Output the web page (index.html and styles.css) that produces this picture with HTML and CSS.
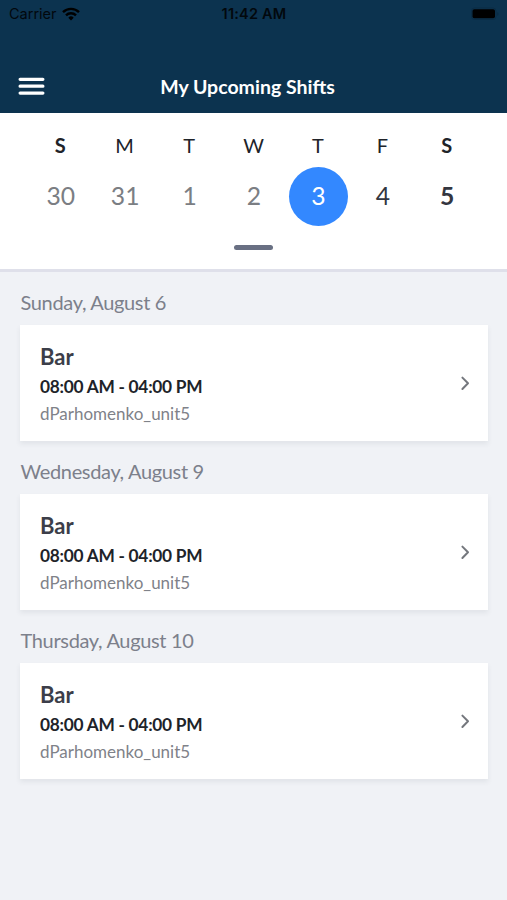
FILE: index.html
```html
<!DOCTYPE html>
<html lang="en">
<head>
<meta charset="utf-8">
<title>My Upcoming Shifts</title>
<link rel="stylesheet" href="styles.css">
</head>
<body>
<header class="header">
  <div class="status">
    <div class="carrier"><span>Carrier</span>
      <svg class="wifi" width="18" height="14" viewBox="0 0 18 14"><g fill="none" stroke="#000" stroke-width="2.4"><path d="M1 5.2a11.3 11.3 0 0 1 16 0"/><path d="M4 8.3a7.1 7.1 0 0 1 10 0"/></g><path d="M9 13.4L6.3 10.7a3.8 3.8 0 0 1 5.4 0z"/></svg>
    </div>
    <div class="clock">11:42 AM</div>
    <svg class="battery" width="28" height="14" viewBox="0 0 28 14"><rect x=".5" y="1" width="24.5" height="11.5" rx="3" fill="none" stroke="#0a2c45"/><rect x="1.5" y="2.3" width="22.5" height="8.9" rx="1.8"/><path d="M26.2 5v4q1.3-.5 1.3-2t-1.3-2z" fill="#0a2c45"/></svg>
  </div>
  <div class="navbar">
    <svg class="menu" width="27" height="20" viewBox="0 0 27 20"><path d="M2.1 3.3h22.8M2.1 10.2h22.8M2.1 17.1h22.8" stroke="#fff" stroke-width="3.2" stroke-linecap="round"/></svg>
    <h1 class="title">My Upcoming Shifts</h1>
  </div>
</header>
<section class="week">
  <div class="days names"><span class="bold">S</span><span>M</span><span>T</span><span>W</span><span>T</span><span>F</span><span class="bold">S</span></div>
  <div class="days dates"><span class="past">30</span><span class="past">31</span><span class="past">1</span><span class="past">2</span><span class="selected">3</span><span>4</span><span class="bold">5</span></div>
  <div class="handle"></div>
</section>
<main class="shifts">
  <section class="group">
    <h2 class="date">Sunday, August 6</h2>
    <article class="card">
      <div><h3 class="role">Bar</h3><p class="time">08:00 AM - 04:00 PM</p><p class="unit">dParhomenko_unit5</p></div>
      <svg class="chevron" width="10" height="16" viewBox="0 0 10 16"><path d="M2.4 2.6L8 8.3 2.4 14"/></svg>
    </article>
  </section>
  <section class="group">
    <h2 class="date">Wednesday, August 9</h2>
    <article class="card">
      <div><h3 class="role">Bar</h3><p class="time">08:00 AM - 04:00 PM</p><p class="unit">dParhomenko_unit5</p></div>
      <svg class="chevron" width="10" height="16" viewBox="0 0 10 16"><path d="M2.4 2.6L8 8.3 2.4 14"/></svg>
    </article>
  </section>
  <section class="group">
    <h2 class="date">Thursday, August 10</h2>
    <article class="card">
      <div><h3 class="role">Bar</h3><p class="time">08:00 AM - 04:00 PM</p><p class="unit">dParhomenko_unit5</p></div>
      <svg class="chevron" width="10" height="16" viewBox="0 0 10 16"><path d="M2.4 2.6L8 8.3 2.4 14"/></svg>
    </article>
  </section>
</main>
</body>
</html>
```
FILE: styles.css
```css
* { box-sizing: border-box; margin: 0; padding: 0; }
body { min-height: 900px; background: #f0f2f6; font-family: Lato, sans-serif; color: #33363f; }
svg { display: block; }
.header { height: 113px; background: #0c334f; }
.status { display: grid; grid-template-columns: 1fr auto 1fr; height: 27px; align-items: center; padding: 0 8px 0 9px; font-family: Inter, sans-serif; font-size: 14.5px; color: #02080d; }
.carrier { display: flex; align-items: center; gap: 5px; }
.clock { font-weight: 600; letter-spacing: .2px; }
.battery { justify-self: end; }
.navbar { display: grid; grid-template-columns: 27px 1fr 27px; align-items: center; height: 40px; margin-top: 39px; padding: 0 30px 0 18px; }
.title { padding-top: 1px; font-size: 19.5px; font-weight: 700; line-height: 24px; color: #fff; text-align: center; white-space: nowrap; }
.week { height: 159px; padding: 19px 28px 0; background: #fff; border-bottom: 3px solid #dfe0ea; }
.days { display: grid; grid-template-columns: repeat(7, 1fr); justify-items: center; align-items: center; }
.names { height: 26px; font-size: 20px; color: #202329; }
.dates { height: 59px; margin-top: 9px; font-size: 24.7px; line-height: 28px; }
.dates span:not(.selected) { padding: 0 0 2px 1px; }
.bold { font-weight: 700; }
.past { color: #7b7e83; }
.selected { display: grid; place-items: center; width: 59px; height: 59px; margin-left: 1px; padding-bottom: 2px; border-radius: 50%; background: #3388ff; color: #fff; }
.handle { width: 39px; height: 5px; margin: 19px auto 0; border-radius: 3px; background: #697083; }
.shifts { display: grid; gap: 20px; padding: 17px 19px 0 20px; }
.date { height: 36px; padding-left: .5px; line-height: 27px; font-size: 20px; font-weight: 400; letter-spacing: -.34px; color: #7c808b; }
.card { display: flex; justify-content: space-between; align-items: center; height: 116px; padding: 0 18px 0 20px; background: #fff; box-shadow: 0 3px 5px rgba(50, 60, 80, .08); }
.group { height: 149px; }
.role { padding-top: 1px; font-size: 22px; font-weight: 700; line-height: 31px; color: #3c3e49; }
.time { font-size: 17.3px; font-weight: 700; line-height: 29px; letter-spacing: -.25px; color: #202329; }
.unit { font-size: 17px; line-height: 25px; color: #7f8289; }
.chevron { fill: none; stroke: #74777d; stroke-width: 2; stroke-linecap: round; stroke-linejoin: round; }
```
